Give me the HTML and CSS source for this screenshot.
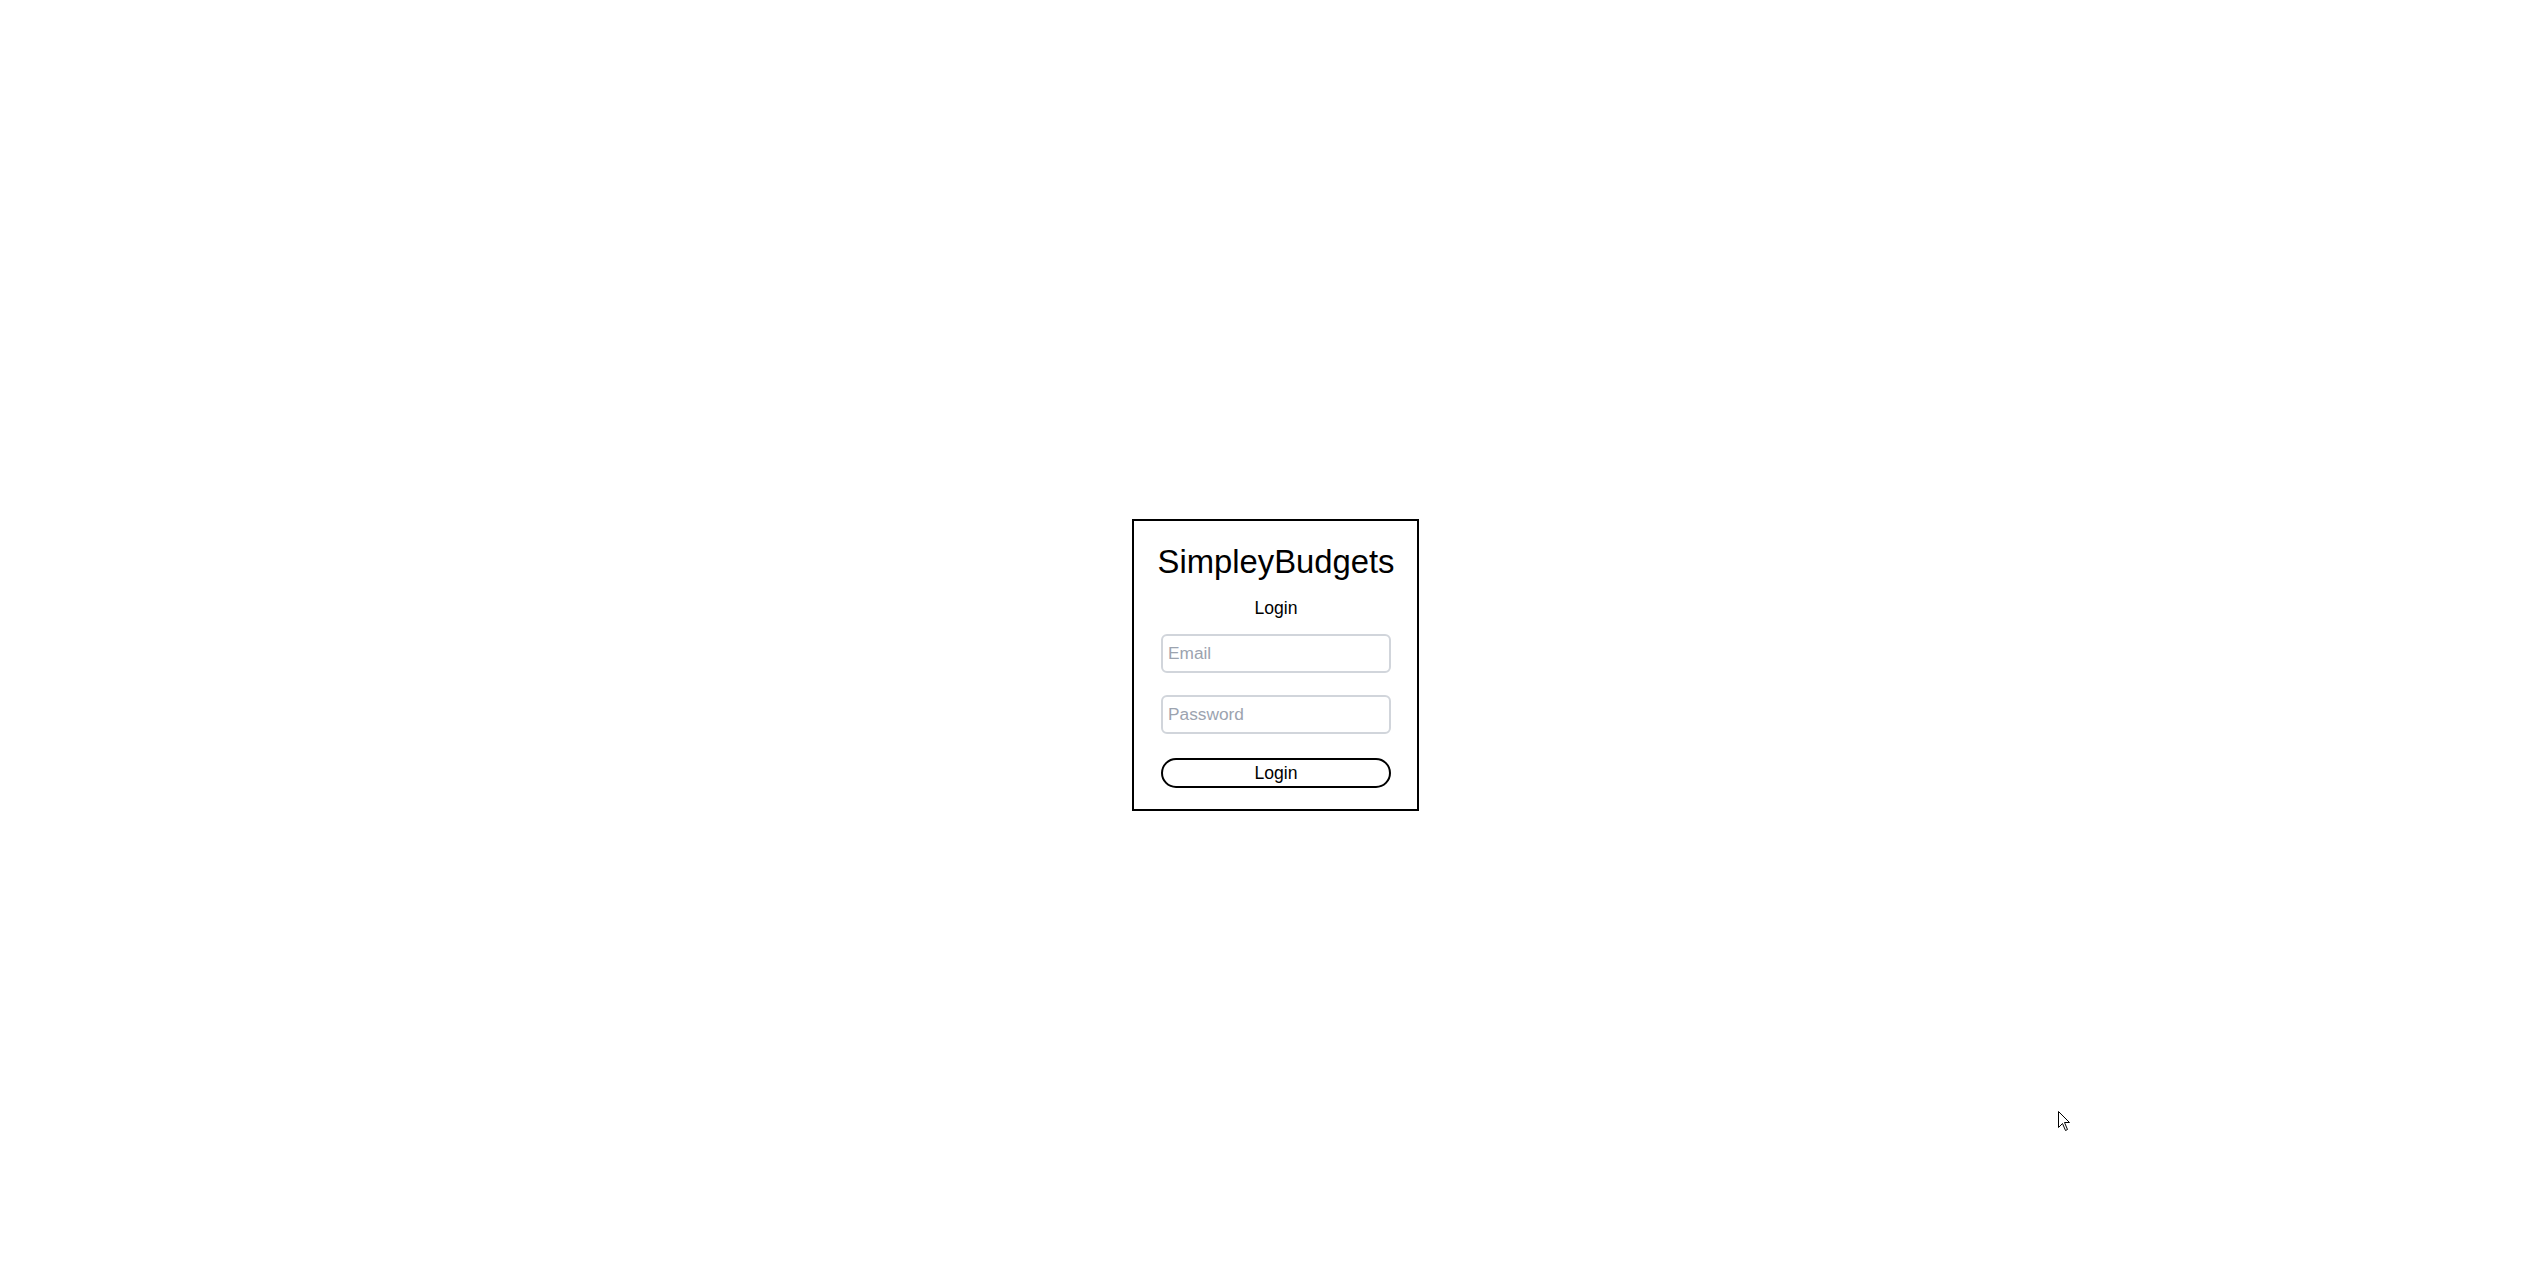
FILE: index.html
```html
<!DOCTYPE html>
<html lang="en">
<head>
<meta charset="utf-8">
<title>SimpleyBudgets - Login</title>
<link rel="stylesheet" href="styles.css">
</head>
<body>
<main class="page">
  <form class="card">
    <h1 class="title">SimpleyBudgets</h1>
    <p class="subtitle">Login</p>
    <input class="field" type="email" placeholder="Email">
    <input class="field" type="password" placeholder="Password">
    <button class="btn" type="button">Login</button>
  </form>
</main>
<svg class="cursor" width="13" height="21" viewBox="0 0 13 21" aria-hidden="true">
  <path d="M0.5 0.5 L0.5 16.5 L4.5 12.5 L7.5 19.5 L9.5 18.5 L6.5 11.5 L11.5 11.5 Z" fill="#fff" stroke="#000" stroke-width="1" stroke-linejoin="miter"/>
</svg>
</body>
</html>
```

FILE: styles.css
```css
html, body {
  margin: 0;
  padding: 0;
  background: #ffffff;
}

body {
  font-family: "Liberation Sans", Arial, sans-serif;
  color: #000;
}

.page {
  box-sizing: border-box;
  min-height: 100vh;
  display: flex;
  align-items: center;
  justify-content: center;
  padding-top: 56px;
  padding-left: 7px;
}

.card {
  width: 230px;
  border: 2px solid #000;
  padding: 22px 26px 21px 27px;
  box-sizing: content-box;
  display: flex;
  flex-direction: column;
  align-items: stretch;
  margin: 0;
}

.card > * {
  box-sizing: border-box;
}

.title {
  margin: 0 -20px;
  font-size: 32.8px;
  font-weight: 400;
  line-height: 37px;
  text-align: center;
  white-space: nowrap;
}

.subtitle {
  margin: 18px 0 15px;
  font-size: 17.6px;
  line-height: 21px;
  text-align: center;
}

.field {
  display: block;
  width: 230px;
  height: 39px;
  margin: 0 0 22px;
  padding: 0 5px;
  border: 2px solid #d1d5db;
  border-radius: 6px;
  font-family: "Liberation Sans", Arial, sans-serif;
  font-size: 17.3px;
  color: #000;
  background: #fff;
  outline: none;
}

.field::placeholder {
  color: #9ca3af;
  opacity: 1;
}

.btn {
  display: block;
  width: 230px;
  height: 30px;
  margin: 2px 0 0;
  padding: 0 6px;
  border: 2px solid #000;
  border-radius: 999px;
  background: #fff;
  font-family: "Liberation Sans", Arial, sans-serif;
  font-size: 17.6px;
  line-height: 24px;
  color: #000;
  text-align: center;
  cursor: pointer;
}

.cursor {
  position: absolute;
  left: 2058px;
  top: 1111px;
}
```
